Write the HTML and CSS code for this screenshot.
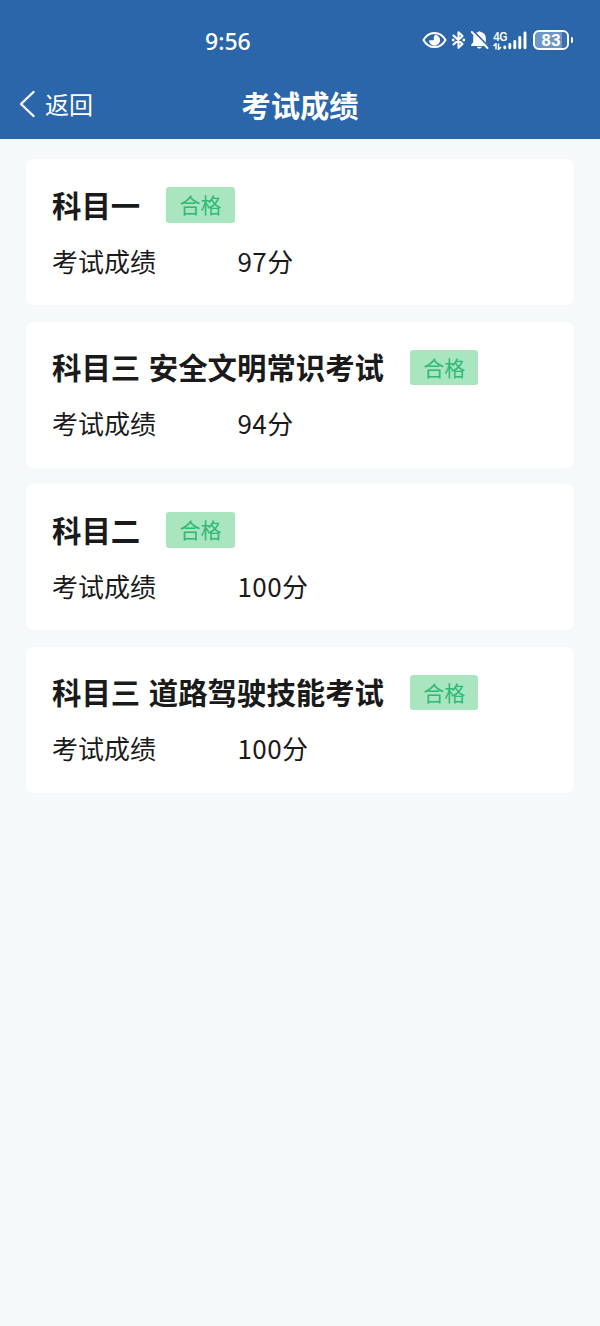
FILE: index.html
```html
<!DOCTYPE html>
<html lang="zh-CN">
  <head>
    <meta charset="UTF-8" />
    <meta name="viewport" content="width=device-width, initial-scale=1.0" />
    <title>考试成绩</title>
    <link rel="stylesheet" href="styles.css">
  </head>
  <body>
    <header class="header">
      <div class="status-bar">
        <span class="status-time">9:56</span>
        <div class="status-icons">
          <svg width="25" height="18" viewBox="0 0 25 18">
            <path d="M1.500 9C4 4.200 8 1.900 12.500 1.900S21 4.200 23.500 9C21 13.800 17 16.100 12.500 16.100S4 13.800 1.500 9Z" fill="none" stroke="#fff" stroke-width="2" />
            <path d="M12.500 3.500a5.600 5.600 0 1 1-5.600 5.500c.8.700 1.900.700 2.600.1.800.4 1.900.1 2.300-.7.400-.7.200-1.400-.3-1.900.9-.7 1.300-1.900 1-3z" fill="#fff" />
          </svg>
          <svg class="icon-bluetooth" width="15" height="20" viewBox="0 0 15 20">
            <path d="M2.500 5.500L11.500 14L7.500 17.800V2.200L11.500 6L2.500 14.500" fill="none" stroke="#fff" stroke-width="2.100" stroke-linejoin="round" stroke-linecap="round" />
            <circle cx="2.200" cy="10" r="1.400" fill="#fff" />
            <circle cx="12.800" cy="10" r="1.400" fill="#fff" />
          </svg>
          <svg class="icon-bell" width="19" height="20" viewBox="0 0 19 20">
            <path d="M3.600 5C4.800 3.500 6.500 2.500 8.200 2.100a1.300 1.300 0 0 1 2.400 0c3.200.6 5.200 2.800 5.200 5.900v4.200l1.700 2.200V16H1.300v-1.600l1.900-2.200V8c0-1.100.1-2.200.4-3zM6.800 16.800h5c-.6 2.400-4.400 2.400-5 0z" fill="#fff" />
            <path d="M3.200 .8L18.800 16.800" stroke="#2c66aa" stroke-width="1.700" />
            <path d="M1.800 2L17.500 18" stroke="#fff" stroke-width="1.900" stroke-linecap="round" />
          </svg>
          <div class="network">
            <div class="network-type">
              <span>4G</span>
              <svg width="9" height="7" viewBox="0 0 9 7">
                <path d="M.5 3L3 .5V6.500M5.500 .5V6.500L8 4" fill="none" stroke="#fff" stroke-width="1.500" />
              </svg>
            </div>
            <svg class="icon-signal" width="25" height="19" viewBox="0 0 25 19">
              <path d="M1.800 16v.8M6.800 13.500V16.800M11.800 10.500V16.800M16.800 6.500V16.800M22 2V16.800" stroke="#fff" stroke-width="2.900" stroke-linecap="round" />
            </svg>
          </div>
          <div class="battery">83</div>
          <div class="battery-tip"></div>
        </div>
      </div>
      <nav class="nav-bar">
        <a class="nav-back" href="#">
          <svg width="18" height="28" viewBox="0 0 18 28">
            <path d="M15.500 2L3 14L15.500 26" fill="none" stroke="#fff" stroke-width="2.400" stroke-linecap="round" stroke-linejoin="round" />
          </svg>
          <span>返回</span>
        </a>
        <h1 class="nav-title">考试成绩</h1>
      </nav>
    </header>

    <main class="results">
      <section class="card">
        <div class="card-head">
          <h2>科目一</h2>
          <span class="badge">合格</span>
        </div>
        <div class="score">
          <span class="score-label">考试成绩</span>
          <span class="score-value">97分</span>
        </div>
      </section>
      <section class="card">
        <div class="card-head">
          <h2>科目三 安全文明常识考试</h2>
          <span class="badge">合格</span>
        </div>
        <div class="score">
          <span class="score-label">考试成绩</span>
          <span class="score-value">94分</span>
        </div>
      </section>
      <section class="card">
        <div class="card-head">
          <h2>科目二</h2>
          <span class="badge">合格</span>
        </div>
        <div class="score">
          <span class="score-label">考试成绩</span>
          <span class="score-value">100分</span>
        </div>
      </section>
      <section class="card">
        <div class="card-head">
          <h2>科目三 道路驾驶技能考试</h2>
          <span class="badge">合格</span>
        </div>
        <div class="score">
          <span class="score-label">考试成绩</span>
          <span class="score-value">100分</span>
        </div>
      </section>
    </main>
  </body>
</html>
```
FILE: styles.css
```css
* {
  box-sizing: border-box;
}

body {
  margin: 0;
  min-height: 100vh;
  background-color: #f5f9fa;
  color: #1a1a1a;
  font-family: "Noto Sans CJK SC", sans-serif;
}

h1,
h2 {
  margin: 0;
}

svg {
  display: block;
}

/* Header */
.header {
  height: 139px;
  background-color: #2c66aa;
  color: #fff;
}

.status-bar {
  display: flex;
  justify-content: space-between;
  align-items: center;
  height: 69px;
  padding: 11px 27px 0 205px;
}

.status-time {
  padding-top: 1px;
  font-family: "Noto Sans", sans-serif;
  font-size: 23px;
  font-weight: 500;
  line-height: 30px;
}

.status-icons {
  display: flex;
  align-items: center;
}

.icon-bluetooth {
  margin-left: 4px;
}

.icon-bell {
  margin-left: 4px;
}

.network {
  display: flex;
  align-items: flex-end;
  margin-left: 4px;
}

.network-type {
  width: 14px;
  font-family: "Roboto", sans-serif;
  font-size: 12px;
  font-weight: 500;
  letter-spacing: -0.5px;
  line-height: 12px;
}

.icon-signal {
  margin-left: -4px;
}

.battery {
  width: 36px;
  height: 20px;
  margin-left: 5px;
  border: 2px solid #fff;
  border-radius: 6px;
  background: linear-gradient(90deg, #6e97c8 83%, #3a70b0 83%);
  font-family: "Roboto", sans-serif;
  font-size: 17px;
  font-weight: 700;
  line-height: 17px;
  text-align: center;
}

.battery-tip {
  width: 2px;
  height: 6px;
  margin-left: 2px;
  border-radius: 1px;
  background-color: #fff;
}

.nav-bar {
  display: grid;
  grid-template-columns: 1fr auto 1fr;
  align-items: center;
  height: 69px;
  padding: 0 18px;
}

.nav-back {
  display: flex;
  align-items: center;
  gap: 9px;
  color: #fff;
  font-size: 24px;
  line-height: 36px;
  text-decoration: none;
}

.nav-title {
  font-size: 29.3px;
  line-height: 38px;
}

/* Results */
.results {
  display: flex;
  flex-direction: column;
  gap: 16.5px;
  padding: 20px 26px;
}

.card {
  height: 146px;
  padding: 28px 26px 0;
  border-radius: 7px;
  background-color: #fff;
}

.card-head {
  display: flex;
  align-items: center;
  gap: 26px;
  height: 35.5px;
}

.card-head h2 {
  padding-bottom: 2px;
  font-size: 29.4px;
  line-height: 36px;
  word-spacing: 2px;
}

.badge {
  width: 68.5px;
  height: 35.5px;
  border-radius: 3px;
  background-color: #a9e6c0;
  color: #2fb978;
  font-size: 21px;
  line-height: 35px;
  text-align: center;
}

.score {
  display: flex;
  margin-top: 19px;
  font-size: 26px;
  line-height: 38px;
}

.score-label {
  width: 185.5px;
}

.score-value {
  letter-spacing: 0.4px;
}
```
